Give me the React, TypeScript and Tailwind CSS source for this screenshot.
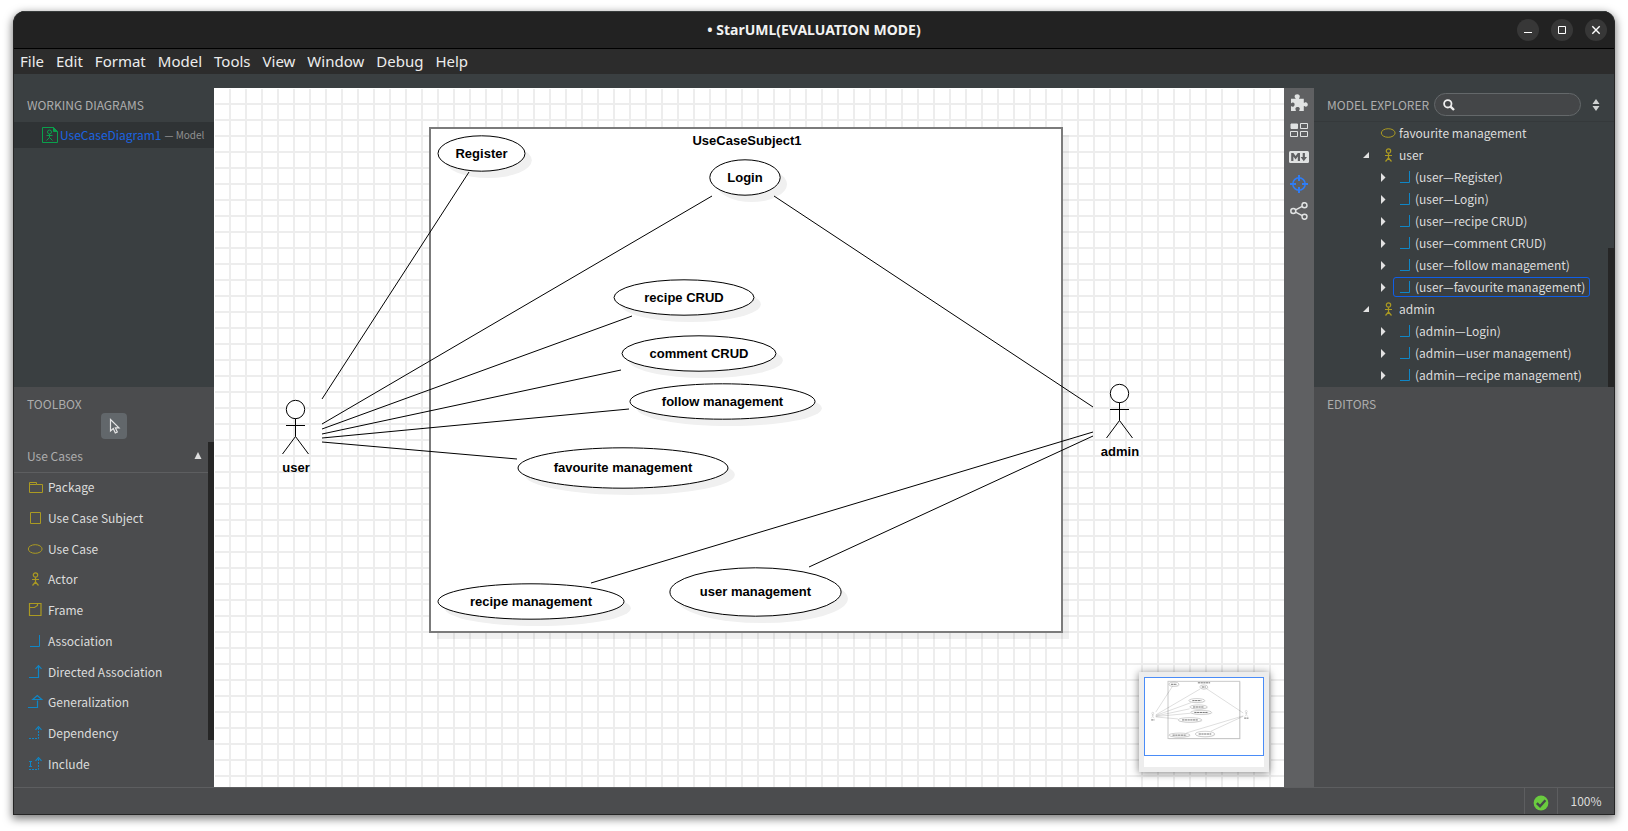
import React from "react";

const ui = "font-['Noto_Sans_CJK_SC',sans-serif]";

const menus = ["File", "Edit", "Format", "Model", "Tools", "View", "Window", "Debug", "Help"];

type IconName =
  | "package" | "subject" | "usecase" | "actor" | "frame"
  | "association" | "directed" | "generalization" | "dependency" | "include";

function ElementIcon({ name }: { name: IconName }) {
  const gold = "#ab9a22";
  const blue = "#0f86c6";
  return (
    <svg width="16" height="16" viewBox="0 0 16 16" fill="none" strokeWidth="1" className="shrink-0" aria-hidden="true">
      {name === "package" && <path stroke={gold} d="M2.5 13.5V3.5H9.5V5.5H15.5V13.5ZM2.5 5.5H9.5" />}
      {name === "subject" && <path stroke={gold} d="M3.5 2.5H13.5V13.5H3.5Z" />}
      {name === "usecase" && <ellipse stroke={gold} cx="8.2" cy="8" rx="6.9" ry="4.3" />}
      {name === "actor" && (
        <g stroke={gold} strokeWidth="1.2">
          <circle cx="8.5" cy="4" r="2.2" />
          <path d="M8.5 6.2V11M5 8.5H12M8.5 11L5.5 14.5M8.5 11L11.5 14.5" />
        </g>
      )}
      {name === "frame" && <path stroke={gold} strokeWidth="1.2" d="M2.5 1.5H14V13.5H2.5ZM2.5 5.5H7.5L10.5 3.5V1.5" />}
      {name === "association" && <path stroke={blue} d="M3 13.5H12.5V2" />}
      {name === "directed" && <path stroke={blue} strokeWidth="1.2" d="M2 13.5H11.5V2M8.5 4.8L11.5 1.6L14.5 4.8" />}
      {name === "generalization" && <path stroke={blue} strokeWidth="1.2" d="M1 13.5H10.5V6.5M5.8 5.5H14.8L10.3 1.5Z" />}
      {name === "dependency" && (
        <g stroke={blue}>
          <path strokeDasharray="2 1" d="M2 13.5H11.5V2" />
          <path strokeWidth="1.2" d="M8.5 4.8L11.5 1.6L14.5 4.8" />
        </g>
      )}
      {name === "include" && (
        <g stroke={blue}>
          <path strokeDasharray="2 1" d="M2 13.5H11.5V2" />
          <path strokeWidth="1.2" d="M8.5 4.8L11.5 1.6L14.5 4.8" />
          <path d="M2 5.5H5M2 10.5H5M3.5 5.5V10.5" />
        </g>
      )}
    </svg>
  );
}

const tools: { icon: IconName; label: string }[] = [
  { icon: "package", label: "Package" },
  { icon: "subject", label: "Use Case Subject" },
  { icon: "usecase", label: "Use Case" },
  { icon: "actor", label: "Actor" },
  { icon: "frame", label: "Frame" },
  { icon: "association", label: "Association" },
  { icon: "directed", label: "Directed Association" },
  { icon: "generalization", label: "Generalization" },
  { icon: "dependency", label: "Dependency" },
  { icon: "include", label: "Include" },
];

type TreeRow = { kind: "usecase" | "actor" | "association"; label: string; selected?: boolean };
const tree: TreeRow[] = [
  { kind: "usecase", label: "favourite management" },
  { kind: "actor", label: "user" },
  { kind: "association", label: "(user—Register)" },
  { kind: "association", label: "(user—Login)" },
  { kind: "association", label: "(user—recipe CRUD)" },
  { kind: "association", label: "(user—comment CRUD)" },
  { kind: "association", label: "(user—follow management)" },
  { kind: "association", label: "(user—favourite management)", selected: true },
  { kind: "actor", label: "admin" },
  { kind: "association", label: "(admin—Login)" },
  { kind: "association", label: "(admin—user management)" },
  { kind: "association", label: "(admin—recipe management)" },
];

const useCases = [
  { label: "Register", cx: 267.5, cy: 65.5, rx: 43.5, ry: 17.7, w: 52 },
  { label: "Login", cx: 531, cy: 89.5, rx: 35.2, ry: 17.7, w: 35 },
  { label: "recipe CRUD", cx: 470, cy: 209.5, rx: 70, ry: 17.7, w: 79 },
  { label: "comment CRUD", cx: 485, cy: 265.5, rx: 77, ry: 17.7, w: 98 },
  { label: "follow management", cx: 508.5, cy: 313.5, rx: 92.5, ry: 17.7, w: 121 },
  { label: "favourite management", cx: 409, cy: 380, rx: 105, ry: 20.2, w: 138 },
  { label: "recipe management", cx: 317, cy: 513.5, rx: 93, ry: 17.7, w: 122 },
  { label: "user management", cx: 541.5, cy: 504, rx: 85.6, ry: 24.2, w: 111 },
];

const links = [
  [255, 84, 108, 311],
  [498, 108, 108, 336],
  [560, 108, 879, 319],
  [418, 228, 108, 341],
  [407, 282, 108, 346],
  [415, 321, 108, 350],
  [303, 371, 108, 354],
  [879, 344, 377, 495],
  [879, 348, 595, 479],
];

const actors = [
  { label: "user", x: 81.5, y: 321.5, w: 28 },
  { label: "admin", x: 905.5, y: 305.5, w: 38 },
];

function Label({ x, y, w, text, mini }: { x: number; y: number; w: number; text: string; mini?: boolean }) {
  if (mini) {
    return <path d={`M${x - w / 2} ${y - 4}h${w}`} stroke="#000" strokeOpacity="0.6" strokeWidth="8" strokeDasharray="20 4" />;
  }
  return (
    <text x={x} y={y} textAnchor="middle" fill="#000" className="font-['Liberation_Sans',Arial,sans-serif] text-[13px] font-bold">
      {text}
    </text>
  );
}

function Diagram({ mini }: { mini?: boolean }) {
  return (
    <g fill="none">
      <rect x="223" y="47" width="632" height="504" fill="#000" fillOpacity="0.06" />
      <rect x="216" y="40" width="632" height="504" fill="#fff" stroke="#7b7b7b" strokeWidth={mini ? 9 : 2} strokeOpacity={mini ? 0.4 : 1} />
      <Label x={533} y={57} w={108} text="UseCaseSubject1" mini={mini} />
      {useCases.map((u) => (
        <g key={u.label}>
          <ellipse cx={u.cx + 6.8} cy={u.cy + 6.8} rx={u.rx} ry={u.ry} fill="#f0f0f0" />
          <ellipse cx={u.cx} cy={u.cy} rx={u.rx} ry={u.ry} fill="#fff" stroke="#000" strokeWidth={mini ? 1.6 : 1} />
          <Label x={u.cx} y={Math.round(u.cy + 4.4)} w={u.w} text={u.label} mini={mini} />
        </g>
      ))}
      {links.map(([x1, y1, x2, y2]) => (
        <line key={`${x1}-${y1}-${x2}`} x1={x1} y1={y1} x2={x2} y2={y2} stroke="#000" strokeWidth={mini ? 1.2 : 1} />
      ))}
      {actors.map((a) => (
        <g key={a.label} stroke="#000" strokeWidth="1">
          <circle cx={a.x} cy={a.y} r="9.2" fill="#fff" />
          <path d={`M${a.x} ${a.y + 9}v18M${a.x - 9.5} ${a.y + 16}h19M${a.x} ${a.y + 27}l-13 17.5M${a.x} ${a.y + 27}l13 17.5`} />
          <g stroke="none">
            <Label x={a.x + 0.5} y={Math.round(a.y + 62)} w={a.w} text={a.label} mini={mini} />
          </g>
        </g>
      ))}
    </g>
  );
}

function WindowButton({ label, children }: { label: string; children: React.ReactNode }) {
  return (
    <button aria-label={label} className="flex size-[22px] items-center justify-center rounded-full bg-[#373737]">
      <svg width="10" height="10" viewBox="0 0 10 10" fill="none" stroke="#fff" aria-hidden="true">{children}</svg>
    </button>
  );
}

function TitleBar() {
  return (
    <header className="relative flex h-[38px] shrink-0 items-center justify-end gap-3 border-b border-t border-b-black border-t-[#383c3c] bg-[#222] pr-[7px]">
      <h1 className="pointer-events-none absolute inset-x-0 pb-[2px] text-center font-['Noto_Sans',sans-serif] text-[14px] font-bold text-[#f2f2f2]">
        • StarUML(EVALUATION MODE)
      </h1>
      <WindowButton label="Minimize"><path d="M1 7.5H9" /></WindowButton>
      <WindowButton label="Maximize"><path d="M1.5 1.5H8.5V8.5H1.5Z" /></WindowButton>
      <WindowButton label="Close"><path strokeWidth="1.4" d="M1.3 1.3L8.7 8.7M8.7 1.3L1.3 8.7" /></WindowButton>
    </header>
  );
}

function LeftSidebar() {
  return (
    <aside className="flex w-[200px] shrink-0 flex-col">
      <section className="flex min-h-0 flex-[299] flex-col overflow-hidden">
        <h2 className="flex h-[34px] shrink-0 items-center pl-[13px] text-[12px] text-[#adadad]">WORKING DIAGRAMS</h2>
        <button className="flex h-[26px] w-full shrink-0 items-center bg-[#2f3335] pb-px pl-[28px] text-left whitespace-nowrap">
          <svg width="16" height="16" viewBox="0 0 16 16" fill="none" stroke="#0aa04c" className="shrink-0" aria-hidden="true">
            <path d="M.5 .5H11.5L15.5 4.5V15.5H.5Z" />
            <path fill="#0aa04c" d="M11.5 .5V4.5H15.5Z" />
            <circle cx="7.5" cy="5" r="2" />
            <path d="M7.5 7V10.5M4.5 8.5H10.5M7.5 10.5L4.5 13.5M7.5 10.5L10.5 13.5" />
          </svg>
          <span className="ml-[2px] text-[12px] text-[#1b63e0]">UseCaseDiagram1</span>
          <span className="ml-[3px] text-[10px] text-[#8f9091]">— Model</span>
        </button>
      </section>
      <section className="flex min-h-0 flex-[400] flex-col overflow-hidden bg-[#4b4c4e]">
        <h2 className="flex h-[26px] shrink-0 items-end pl-[13px] text-[12px] leading-[18px] text-[#adadad]">TOOLBOX</h2>
        <div className="flex h-[29px] shrink-0 justify-center">
          <button aria-label="Select" className="flex size-[26px] items-center justify-center rounded bg-[#62676b]">
            <svg width="16" height="16" viewBox="0 0 16 16" fill="none" stroke="#e6e6e6" strokeWidth="1.2" aria-hidden="true">
              <path d="M4.5 1.5V13L7.3 10.5L9.3 15L11.3 14L9.4 9.9H13Z" />
            </svg>
          </button>
        </div>
        <div className="flex min-h-0 flex-1">
          <div className="flex-1">
            <button className="flex h-[31px] w-full items-center justify-between border-b border-[#5d5e60] pr-[6px] pb-[2px] pl-[13px] text-[12px] text-[#adadad]">
              Use Cases
              <svg width="8" height="8" viewBox="0 0 8 8" aria-hidden="true"><path fill="#ddd" d="M4 0L7.5 7H.5Z" /></svg>
            </button>
            <ul className="flex h-[307px] flex-col">
              {tools.map((t) => (
                <li key={t.label} className="flex-1">
                  <button className="flex h-full w-full items-center gap-[5px] pb-[2px] pl-[13px] text-[12px] text-[#dcdcdc]">
                    <ElementIcon name={t.icon} />
                    {t.label}
                  </button>
                </li>
              ))}
            </ul>
          </div>
          <div className="h-[298px] w-[6px] bg-[#262626]" />
        </div>
      </section>
    </aside>
  );
}

function Canvas() {
  return (
    <main className="relative min-w-0 flex-1 overflow-hidden bg-white">
      <svg className="absolute inset-0 size-full" role="img" aria-label="Use case diagram">
        <defs>
          <pattern id="grid" width="16" height="16" patternUnits="userSpaceOnUse">
            <path fill="#ededed" d="M15 0H16V16H15ZM0 0H1V16H0ZM1 0H15V1H1ZM1 15H15V16H1Z" />
          </pattern>
        </defs>
        <rect x="1" y="1" width="100%" height="100%" fill="url(#grid)" />
        <Diagram />
      </svg>
      <div className="absolute right-[15px] bottom-[15px] h-[100px] w-[130px] bg-[#ededed] p-[5px] shadow-[0_1px_8px_rgba(0,0,0,0.5)]">
        <svg width="120" height="90" viewBox="0 0 120 90" className="block bg-white" aria-hidden="true">
          <g transform="translate(-.5 -.2) scale(.1135)"><Diagram mini /></g>
          <rect x=".5" y=".5" width="119" height="78" fill="none" stroke="#4a8cf7" />
        </svg>
      </div>
    </main>
  );
}

function IconBar() {
  const item = "flex h-[27px] w-full items-center justify-center";
  return (
    <nav className="flex w-[30px] shrink-0 flex-col bg-[#5f6062] pt-px text-[#e0e2e2]">
      <button className={item} aria-label="Extensions">
        <svg width="18" height="18" viewBox="0 0 18 18" fill="currentColor" aria-hidden="true">
          <path d="M1 4.8H5.6C6.2 4.2 4.6 4 4.6 2.4C4.6 1 5.8 .2 7.2 .2S9.8 1 9.8 2.4C9.8 4 8.5 4.2 9.1 4.8H13.8V8.8C14.4 9.2 14.6 8.2 15.7 8.2C16.9 8.2 17.8 9.2 17.8 10.5S16.9 12.8 15.7 12.8C14.6 12.8 14.4 11.8 13.8 12.2V17H9.4C8.7 16.3 9.8 15.9 9.8 14.8C9.8 13.7 8.8 13.1 7.6 13.1S5.4 13.7 5.4 14.8C5.4 15.9 6.3 16.3 5.7 17H1V12.3C1.6 11.8 2 12.8 3 12.8C4 12.8 4.6 11.8 4.6 10.6S4 8.6 3 8.6C2 8.6 1.6 9.6 1 9.2Z" />
        </svg>
      </button>
      <button className={item} aria-label="Layouts">
        <svg width="18" height="14" viewBox="0 0 18 14" fill="none" stroke="currentColor" aria-hidden="true">
          <path fill="currentColor" d="M1 1H7.5V5.5H1Z" />
          <path d="M10.5 .5H17.5V5.5H10.5ZM.5 8.5H7.5V13.5H.5ZM10.5 8.5H17.5V13.5H10.5Z" />
        </svg>
      </button>
      <button className={item} aria-label="Markdown">
        <svg width="20" height="12" viewBox="0 0 20 12" aria-hidden="true">
          <rect width="20" height="12" rx="1.5" fill="currentColor" />
          <path fill="#5f6062" d="M2.2 10V2H4.4L6.6 5L8.8 2H11V10H8.8V5.6L6.6 8.4L4.4 5.6V10ZM13.7 2H15.9V6H18L14.8 10.2L11.6 6H13.7Z" />
        </svg>
      </button>
      <button className={`${item} text-[#2f7df6]`} aria-label="Navigator">
        <svg width="18" height="18" viewBox="0 0 18 18" fill="none" stroke="currentColor" aria-hidden="true">
          <circle cx="9" cy="9" r="6.2" strokeWidth="1.5" />
          <path strokeWidth="2" d="M9 0V6M9 12V18M0 9H6M12 9H18" />
        </svg>
      </button>
      <button className={item} aria-label="Share">
        <svg width="18" height="18" viewBox="0 0 18 18" fill="none" stroke="currentColor" strokeWidth="1.5" aria-hidden="true">
          <circle cx="3.3" cy="9" r="2.5" />
          <circle cx="14.5" cy="3.2" r="2.5" />
          <circle cx="14.5" cy="14.8" r="2.5" />
          <path d="M5.6 7.9L12.2 4.4M5.6 10.1L12.2 13.6" />
        </svg>
      </button>
    </nav>
  );
}

function TreeItem({ row }: { row: TreeRow }) {
  if (row.kind === "association") {
    return (
      <li className="flex h-[22px] items-center pl-[67px]">
        <svg width="12" height="9" viewBox="0 0 12 9" className="shrink-0" aria-hidden="true"><path fill="#e2e2e2" d="M0 0V9L4.5 4.5Z" /></svg>
        <button
          className={`flex h-5 items-center gap-[2px] rounded-[3px] border pr-1 pl-[3px] whitespace-nowrap ${
            row.selected ? "border-[#0f5fe8]" : "border-transparent"
          }`}
        >
          <ElementIcon name="association" />
          {row.label}
        </button>
      </li>
    );
  }
  return (
    <li className="flex h-[22px] items-center pl-[49px] whitespace-nowrap">
      <svg width="17" height="8" viewBox="0 0 17 8" className="shrink-0" aria-hidden="true">
        {row.kind === "actor" && <path fill="#e2e2e2" d="M6 1V7H0Z" />}
      </svg>
      <button className="flex h-full items-center gap-[3px]">
        <ElementIcon name={row.kind} />
        {row.label}
      </button>
    </li>
  );
}

function RightSidebar() {
  return (
    <aside className="flex w-[300px] shrink-0 flex-col">
      <section className="flex min-h-0 flex-[299] flex-col overflow-hidden">
        <div className="flex h-[34px] shrink-0 items-center border-b border-[#35393b] pl-[13px]">
          <h2 className="w-[107px] shrink-0 text-[12px] whitespace-nowrap text-[#adadad]">MODEL EXPLORER</h2>
          <label className="flex h-[23px] w-[147px] items-center rounded-full border border-[#64686a] bg-[#444648] pl-2">
            <svg width="12" height="12" viewBox="0 0 12 12" fill="none" stroke="#eee" className="shrink-0" aria-hidden="true">
              <circle cx="4.8" cy="4.8" r="3.7" strokeWidth="1.8" />
              <path strokeWidth="2.4" d="M7.6 7.6L11 11" />
            </svg>
            <input type="text" aria-label="Search model" className="w-full min-w-0 bg-transparent px-1 text-[12px] text-[#dcdcdc] outline-none" />
          </label>
          <button aria-label="Sort" className="ml-[11px]">
            <svg width="8" height="12" viewBox="0 0 8 12" fill="#d0d2d2" aria-hidden="true"><path d="M4 0L7.5 5H.5ZM4 12L.5 7H7.5Z" /></svg>
          </button>
        </div>
        <div className="flex min-h-0 flex-1 justify-between">
          <ul className="text-[12px] text-[#dcdcdc]">
            {tree.map((row) => <TreeItem key={row.label} row={row} />)}
          </ul>
          <div className="mt-auto h-[139px] w-[6px] shrink-0 bg-[#262626]" />
        </div>
      </section>
      <section className="min-h-0 flex-[400] bg-[#4b4c4e]">
        <h2 className="flex h-[26px] items-end pl-[13px] text-[12px] leading-[18px] text-[#adadad]">EDITORS</h2>
      </section>
    </aside>
  );
}

export default function App() {
  return (
    <div className="flex h-screen min-w-[1000px] bg-white px-[13px] pt-[11px] pb-4">
      <div className={`flex min-w-0 flex-1 flex-col overflow-hidden rounded-t-[12px] border-x border-b border-[#252525] bg-[#3a3f41] shadow-[0_3px_9px_1px_rgba(0,0,0,0.5)] ${ui}`}>
        <TitleBar />
        <nav className="flex h-[25px] shrink-0 items-center gap-3 bg-[#2c2c2c] pl-[6px] font-['Noto_Sans',sans-serif] text-[15px] text-[#ededed]">
          {menus.map((m) => <button key={m}>{m}</button>)}
        </nav>
        <div className="flex min-h-0 flex-1 pt-[14px]">
          <LeftSidebar />
          <Canvas />
          <IconBar />
          <RightSidebar />
        </div>
        <footer className="flex h-[27px] shrink-0 justify-end border-t border-[#5d5e60] bg-[#4b4c4e] text-[12px] text-[#dcdcdc]">
          <button aria-label="Validation passed" className="flex w-[33px] items-center justify-center border-l border-[#5d5e60] pt-[3px]">
            <svg width="16" height="16" viewBox="0 0 16 16" fill="none" aria-hidden="true">
              <circle cx="8" cy="8" r="7.4" fill="#6acb3f" />
              <path stroke="#45484a" strokeWidth="2.4" d="M3.8 8.2L7 11.2L12.4 5.2" />
            </svg>
          </button>
          <button className="w-[57px] border-l border-[#5d5e60]">100%</button>
        </footer>
      </div>
    </div>
  );
}
